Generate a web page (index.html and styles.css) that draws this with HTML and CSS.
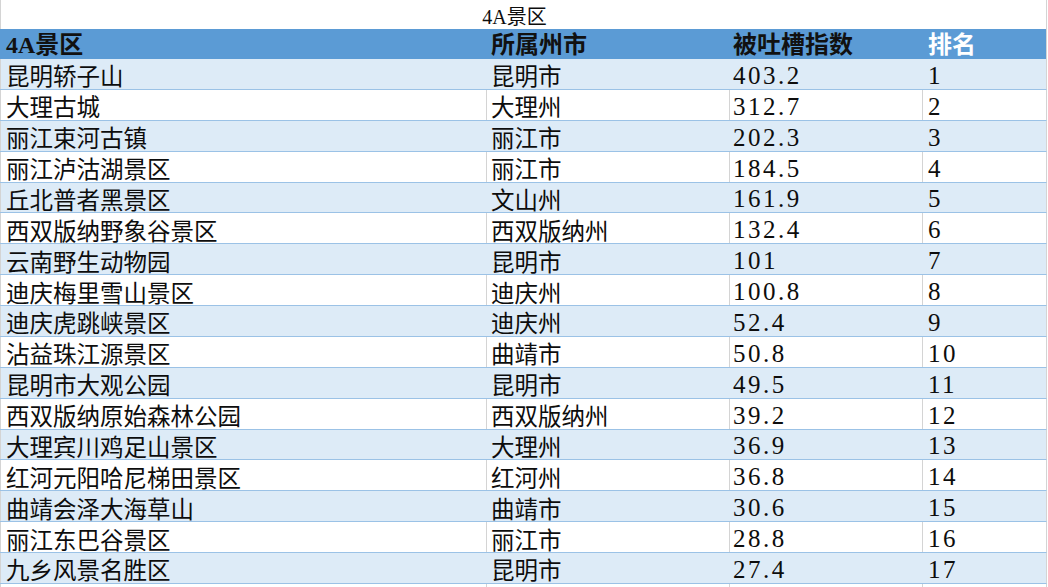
FILE: index.html
```html
<!DOCTYPE html>
<html lang="zh">
<head>
<meta charset="utf-8">
<title>4A景区</title>
<link rel="stylesheet" href="styles.css">
</head>
<body>
<div class="sheet">
  <div class="title-row"><span class="title">4A景区</span></div>
  <div class="row head">
    <div class="c c1">4A景区</div>
    <div class="c c2">所属州市</div>
    <div class="c c3">被吐槽指数</div>
    <div class="c c4 white">排名</div>
  </div>
  <div class="row odd"><div class="c c1">昆明轿子山</div><div class="c c2">昆明市</div><div class="c c3 num">403.2</div><div class="c c4 num">1</div></div>
  <div class="row even"><div class="c c1">大理古城</div><div class="c c2">大理州</div><div class="c c3 num">312.7</div><div class="c c4 num">2</div></div>
  <div class="row odd"><div class="c c1">丽江束河古镇</div><div class="c c2">丽江市</div><div class="c c3 num">202.3</div><div class="c c4 num">3</div></div>
  <div class="row even"><div class="c c1">丽江泸沽湖景区</div><div class="c c2">丽江市</div><div class="c c3 num">184.5</div><div class="c c4 num">4</div></div>
  <div class="row odd"><div class="c c1">丘北普者黑景区</div><div class="c c2">文山州</div><div class="c c3 num">161.9</div><div class="c c4 num">5</div></div>
  <div class="row even"><div class="c c1">西双版纳野象谷景区</div><div class="c c2">西双版纳州</div><div class="c c3 num">132.4</div><div class="c c4 num">6</div></div>
  <div class="row odd"><div class="c c1">云南野生动物园</div><div class="c c2">昆明市</div><div class="c c3 num">101</div><div class="c c4 num">7</div></div>
  <div class="row even"><div class="c c1">迪庆梅里雪山景区</div><div class="c c2">迪庆州</div><div class="c c3 num">100.8</div><div class="c c4 num">8</div></div>
  <div class="row odd"><div class="c c1">迪庆虎跳峡景区</div><div class="c c2">迪庆州</div><div class="c c3 num">52.4</div><div class="c c4 num">9</div></div>
  <div class="row even"><div class="c c1">沾益珠江源景区</div><div class="c c2">曲靖市</div><div class="c c3 num">50.8</div><div class="c c4 num">10</div></div>
  <div class="row odd"><div class="c c1">昆明市大观公园</div><div class="c c2">昆明市</div><div class="c c3 num">49.5</div><div class="c c4 num">11</div></div>
  <div class="row even"><div class="c c1">西双版纳原始森林公园</div><div class="c c2">西双版纳州</div><div class="c c3 num">39.2</div><div class="c c4 num">12</div></div>
  <div class="row odd"><div class="c c1">大理宾川鸡足山景区</div><div class="c c2">大理州</div><div class="c c3 num">36.9</div><div class="c c4 num">13</div></div>
  <div class="row even"><div class="c c1">红河元阳哈尼梯田景区</div><div class="c c2">红河州</div><div class="c c3 num">36.8</div><div class="c c4 num">14</div></div>
  <div class="row odd"><div class="c c1">曲靖会泽大海草山</div><div class="c c2">曲靖市</div><div class="c c3 num">30.6</div><div class="c c4 num">15</div></div>
  <div class="row even"><div class="c c1">丽江东巴谷景区</div><div class="c c2">丽江市</div><div class="c c3 num">28.8</div><div class="c c4 num">16</div></div>
  <div class="row odd"><div class="c c1">九乡风景名胜区</div><div class="c c2">昆明市</div><div class="c c3 num">27.4</div><div class="c c4 num">17</div></div>
  <div class="row blank"><div class="c c1"></div><div class="c c2"></div><div class="c c3"></div><div class="c c4"></div></div>
</div>
</body>
</html>
```
FILE: styles.css
```css
html, body {
  margin: 0;
  padding: 0;
  background: #ffffff;
}

body {
  font-family: "Noto Sans CJK SC", "Noto Sans", sans-serif;
  color: #0d0d0d;
}

.sheet {
  width: 1047px;
}

.title-row {
  height: 29px;
  box-sizing: border-box;
  border-left: 1px solid #d4d4d4;
  border-right: 1px solid #d4d4d4;
  display: flex;
  align-items: flex-end;
  justify-content: center;
  padding-right: 18px;
  padding-bottom: 2px;
}

.title {
  font-family: "Liberation Serif", "Noto Sans CJK SC", serif;
  font-size: 20px;
  line-height: 1;
  font-weight: 400;
}

.row {
  display: grid;
  grid-template-columns: 486px 243px 193px 124px;
  box-sizing: border-box;
  border-right: 1px solid #d4d4d4;
  height: 30.88px;
  border-bottom: 1px solid #9bc2e6;
}

.row.head {
  height: 30px;
  background: #5b9bd5;
  border-bottom: none;
}

.row.odd {
  background: #ddebf7;
}

.row.even {
  background: #ffffff;
}

.row.blank {
  border-bottom: none;
}

.c {
  box-sizing: border-box;
  display: flex;
  align-items: flex-end;
  white-space: nowrap;
  border-left: 1px solid transparent;
  font-size: 23.5px;
  line-height: 1;
  padding-bottom: 1px;
  font-weight: 400;
  min-width: 0;
}

.c1 { padding-left: 5px; border-left-color: #d4d4d4; }
.c2 { padding-left: 4px; }
.c3 { padding-left: 3px; }
.c4 { padding-left: 5px; }

.row.even .c,
.row.blank .c {
  border-left-color: #d4d4d4;
}

.row.head .c {
  border-left-color: #5b9bd5;
  font-family: "Liberation Serif", "Noto Sans CJK SC", serif;
  font-weight: 700;
  font-size: 24px;
  padding-bottom: 2px;
  color: #111111;
}

.row.head .c.white {
  color: #ffffff;
}

.num {
  font-family: "Liberation Serif", serif;
  font-size: 25px;
  letter-spacing: 2.5px;
  padding-bottom: 1px;
}
```
